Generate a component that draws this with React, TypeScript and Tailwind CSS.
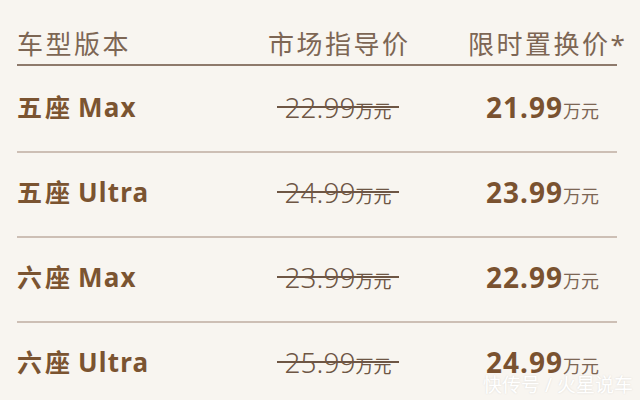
import React from "react";

const rows = [
  { name: "五座", model: "Max", old: "22.99", now: "21.99" },
  { name: "五座", model: "Ultra", old: "24.99", now: "23.99" },
  { name: "六座", model: "Max", old: "23.99", now: "22.99" },
  { name: "六座", model: "Ultra", old: "25.99", now: "24.99" },
];

export default function App() {
  return (
    <div className="relative w-[640px] h-[400px] overflow-hidden bg-[#f8f5f0] font-['Noto_Sans','Noto_Sans_CJK_SC',sans-serif] pl-[17px] pr-[23px]">
      <div className="flex h-[64px] items-end pb-[7px] text-[26px] leading-none tracking-[2.5px] text-[#7d6654]">
        <div className="flex-1">车型版本</div>
        <div className="w-[140px] text-center whitespace-nowrap">市场指导价</div>
        <div className="w-[60px]" />
        <div className="w-[149px] text-center whitespace-nowrap">限时置换价*</div>
      </div>
      <div className="h-[2px] bg-[#8e7a6c]" />
      {rows.map((r, i) => (
        <div key={r.name + r.model}>
          <div
            className={
              i === 0
                ? "flex items-center h-[85px] pb-[3px]"
                : "flex items-center h-[83px] pb-[5px]"
            }
          >
            <div className="flex-1 flex items-baseline text-[25px] font-bold leading-none text-[#7b5431] whitespace-nowrap">
              <span className="tracking-[3px]">{r.name}</span>
              <span className="ml-[5px] text-[26px] tracking-[1.2px]">{r.model}</span>
            </div>
            <div className="w-[140px] flex justify-center">
              <span className="relative inline-flex items-baseline px-[8px] leading-none text-[#6e5644]">
                <span className="text-[28px] font-light">{r.old}</span>
                <span className="text-[18px]">万元</span>
                <span className="absolute left-0 right-0 top-1/2 h-[2px] -translate-y-1/2 bg-[#6e5644]" />
              </span>
            </div>
            <div className="w-[60px]" />
            <div className="w-[149px] flex justify-center">
              <span className="inline-flex items-baseline leading-none">
                <span className="text-[28px] font-bold tracking-[1px] text-[#7a5230]">{r.now}</span>
                <span className="text-[18px] text-[#7d6654]">万元</span>
              </span>
            </div>
          </div>
          {i < 3 && <div className="h-[2px] bg-[#cdbfb5]" />}
        </div>
      ))}
      <div className="absolute right-[7px] bottom-[7px] text-[19px] leading-[15px] text-white whitespace-nowrap [text-shadow:0_0_2px_rgba(0,0,0,0.12)]">
        快传号 / 火星说车
      </div>
    </div>
  );
}
